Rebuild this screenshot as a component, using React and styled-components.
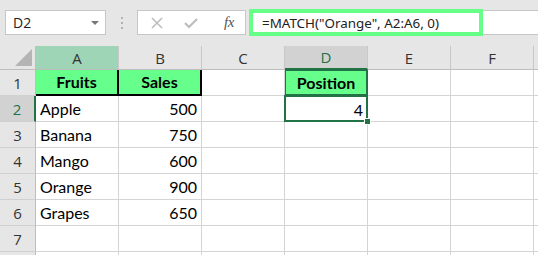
import React from "react";
import styled, { createGlobalStyle, css } from "styled-components";

const Global = createGlobalStyle`
  html, body { margin: 0; padding: 0; background: #ffffff; }
  body { width: 538px; height: 255px; overflow: hidden; font-family: "Lato", "Liberation Sans", sans-serif; }
`;

const Page = styled.div`
  width: 538px;
  height: 255px;
  overflow: hidden;
  background: #ffffff;
`;

const Toolbar = styled.div`
  height: 46px;
  background: #e6e6e6;
  display: flex;
  align-items: flex-start;
  padding-top: 10px;
  box-sizing: border-box;
`;

const NameBox = styled.div`
  margin-left: 5px;
  width: 101px;
  height: 25px;
  box-sizing: border-box;
  background: #fff;
  border: 1px solid #c6c6c6;
  display: flex;
  align-items: center;
  justify-content: space-between;
  padding: 0 6px 0 7px;
  font-family: "Open Sans", "Noto Sans", sans-serif;
  font-size: 14px;
  color: #222;
`;

const Arrow = styled.span`
  width: 0;
  height: 0;
  border-left: 4px solid transparent;
  border-right: 4px solid transparent;
  border-top: 4px solid #777;
`;

const Dots = styled.div`
  width: 31px;
  height: 25px;
  display: flex;
  flex-direction: column;
  align-items: center;
  justify-content: center;
  gap: 3px;
`;

const Dot = styled.span`
  width: 2px;
  height: 2px;
  background: #b3b3b3;
`;

const FxBox = styled.div`
  width: 109px;
  height: 25px;
  box-sizing: border-box;
  background: #fff;
  border: 1px solid #c6c6c6;
  display: flex;
  align-items: center;
  padding-left: 13px;
  gap: 21px;
`;

const Fx = styled.span`
  font-family: "Liberation Serif", serif;
  font-style: italic;
  font-size: 15px;
  color: #555;
  margin-left: 5px;
  letter-spacing: -0.5px;
`;

const FormulaBar = styled.div`
  margin-left: 3px;
  flex: 1;
  height: 25px;
  box-sizing: border-box;
  background: #fff;
  border-top: 1px solid #c6c6c6;
  border-bottom: 1px solid #c6c6c6;
  border-left: 1px solid #c6c6c6;
  position: relative;
`;

const Highlight = styled.div`
  position: absolute;
  left: -1px;
  top: -2px;
  width: 234px;
  height: 27px;
  box-sizing: border-box;
  border: 4px solid #66ff88;
  display: flex;
  align-items: center;
  padding-left: 9px;
  font-family: "Noto Sans", "Open Sans", sans-serif;
  font-size: 13.4px;
  color: #222;
  white-space: nowrap;
`;

const Grid = styled.div`
  display: grid;
  grid-template-columns: 36px repeat(7, 83px);
  grid-template-rows: 24px repeat(8, 26px);
`;

const Corner = styled.div`
  background: #e6e6e6;
  border-right: 1px solid #bdbdbd;
  border-bottom: 1px solid #bdbdbd;
  box-sizing: border-box;
  display: flex;
  align-items: flex-end;
  justify-content: flex-end;
  padding: 0 3px 3px 0;
`;

const Tri = styled.span`
  width: 0;
  height: 0;
  border-left: 17px solid transparent;
  border-bottom: 17px solid #b4b4b4;
`;

const ColHead = styled.div`
  box-sizing: border-box;
  display: flex;
  align-items: center;
  justify-content: center;
  font-family: "Open Sans", "Noto Sans", sans-serif;
  font-size: 15px;
  color: #333;
  background: #e6e6e6;
  border-right: 1px solid #c8c8c8;
  border-bottom: 1px solid #bdbdbd;
  ${(p) =>
    p.$tint &&
    css`
      background: #9fd5b7;
    `}
  ${(p) =>
    p.$active &&
    css`
      background: #d2d2d2;
      color: #217346;
      border-bottom: 2px solid #217346;
    `}
`;

const RowHead = styled.div`
  box-sizing: border-box;
  display: flex;
  align-items: center;
  justify-content: center;
  font-family: "Open Sans", "Noto Sans", sans-serif;
  font-size: 15px;
  color: #333;
  background: #e6e6e6;
  border-right: 1px solid #bdbdbd;
  border-bottom: 1px solid #d0d0d0;
  padding-top: 1px;
  ${(p) =>
    p.$active &&
    css`
      background: #d2d2d2;
      color: #217346;
      border-right: 2px solid #217346;
    `}
`;

const Cell = styled.div`
  box-sizing: border-box;
  position: relative;
  display: flex;
  align-items: flex-end;
  justify-content: ${(p) => (p.$align === "right" ? "flex-end" : p.$align === "center" ? "center" : "flex-start")};
  padding: 0 4px 3px 4px;
  font-family: "Lato", "Liberation Sans", sans-serif;
  font-size: 16px;
  color: #000;
  border-right: 1px solid #d4d4d4;
  border-bottom: 1px solid #d4d4d4;
  white-space: nowrap;
  ${(p) =>
    p.$head &&
    css`
      background: #66ff8c;
      font-weight: 700;
      border-right: 2px solid #000;
      border-bottom: 2px solid #000;
    `}
  ${(p) =>
    p.$pos &&
    css`
      background: #66ff8c;
      font-weight: 700;
      box-shadow: inset 0 0 0 1px #217346;
      border-color: #217346;
    `}
  ${(p) =>
    p.$selected &&
    css`
      border: none;
      box-shadow: inset 0 0 0 2px #217346;
      margin: -1px 0 0 -1px;
      padding-right: 5px;
    `}
`;

const Handle = styled.span`
  position: absolute;
  right: -3px;
  bottom: -3px;
  width: 5px;
  height: 5px;
  background: #217346;
  border: 1px solid #fff;
  z-index: 2;
`;

const cols = ["A", "B", "C", "D", "E", "F", ""];
const data = [
  ["Apple", "500"],
  ["Banana", "750"],
  ["Mango", "600"],
  ["Orange", "900"],
  ["Grapes", "650"],
];

function Row({ n }) {
  const cells = [];
  for (let c = 0; c < 7; c++) {
    let content = null;
    let props = {};
    if (n === 1 && c === 0) { content = "Fruits"; props = { $head: true, $align: "center" }; }
    else if (n === 1 && c === 1) { content = "Sales"; props = { $head: true, $align: "center" }; }
    else if (n === 1 && c === 3) { content = "Position"; props = { $pos: true, $align: "center" }; }
    else if (n === 2 && c === 3) { content = "4"; props = { $selected: true, $align: "right" }; }
    else if (n >= 2 && n <= 6 && c === 0) { content = data[n - 2][0]; }
    else if (n >= 2 && n <= 6 && c === 1) { content = data[n - 2][1]; props = { $align: "right" }; }
    cells.push(
      <Cell key={c} {...props}>
        {content}
        {props.$selected && <Handle />}
      </Cell>
    );
  }
  return (
    <>
      <RowHead $active={n === 2}>{n <= 7 ? n : null}</RowHead>
      {cells}
    </>
  );
}

export default function App() {
  return (
    <Page>
      <Global />
      <Toolbar>
        <NameBox>
          <span>D2</span>
          <Arrow />
        </NameBox>
        <Dots>
          <Dot />
          <Dot />
          <Dot />
        </Dots>
        <FxBox>
          <svg width="12" height="12" viewBox="0 0 12 12">
            <path d="M1 1 L11 11 M11 1 L1 11" stroke="#bdbdbd" strokeWidth="1.6" fill="none" />
          </svg>
          <svg width="14" height="12" viewBox="0 0 14 12">
            <path d="M1 6 L5 10 L13 2" stroke="#bdbdbd" strokeWidth="2.2" fill="none" />
          </svg>
          <Fx>fx</Fx>
        </FxBox>
        <FormulaBar>
          <Highlight>=MATCH("Orange", A2:A6, 0)</Highlight>
        </FormulaBar>
      </Toolbar>
      <Grid>
        <Corner>
          <Tri />
        </Corner>
        {cols.map((c, i) => (
          <ColHead key={i} $tint={c === "A"} $active={c === "D"}>
            {c}
          </ColHead>
        ))}
        {[1, 2, 3, 4, 5, 6, 7, 8].map((n) => (
          <Row key={n} n={n} />
        ))}
      </Grid>
    </Page>
  );
}
